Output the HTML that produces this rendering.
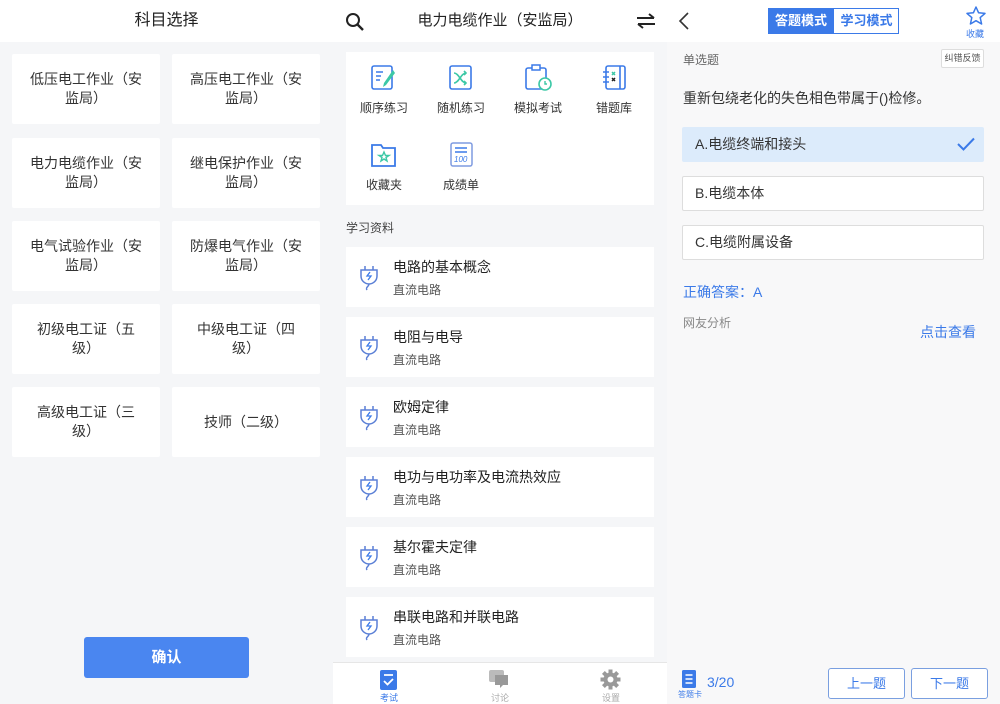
<!DOCTYPE html>
<html><head><meta charset="utf-8">
<style>
*{margin:0;padding:0;box-sizing:border-box}
body{width:1000px;height:704px;position:relative;overflow:hidden;background:#f5f6f8;font-family:"Liberation Sans","Noto Sans CJK SC",sans-serif;color:#333}
.a{position:absolute}
.hdr{background:#fff;height:42px;top:0}
.card{background:#fff;position:absolute;display:flex;align-items:center;justify-content:center;text-align:center;font-size:14px;line-height:19px;color:#333;border-radius:2px}
.ic{position:absolute;text-align:center;font-size:12px;color:#333;width:70px}
.li{position:absolute;left:346px;width:308px;height:60px;background:#fff}
.li .t{position:absolute;left:47px;top:10px;font-size:14px;color:#222}
.li .s{position:absolute;left:47px;top:34px;font-size:12px;color:#555}
.li svg{position:absolute;left:12px;top:18px}
.opt{position:absolute;left:682px;width:302px;height:35px;border:1px solid #ddd;background:#fff;font-size:14px;padding-left:12px;line-height:33px;color:#333;border-radius:2px}
</style></head><body>
<!-- Left -->
<div class="a hdr" style="left:0;width:333px;text-align:center;font-size:16px;line-height:42px;color:#222">科目选择</div>
<div class="card" style="left:12px;top:54px;width:148px;height:70px">低压电工作业（安<br>监局）</div>
<div class="card" style="left:172px;top:54px;width:148px;height:70px">高压电工作业（安<br>监局）</div>
<div class="card" style="left:12px;top:138px;width:148px;height:70px">电力电缆作业（安<br>监局）</div>
<div class="card" style="left:172px;top:138px;width:148px;height:70px">继电保护作业（安<br>监局）</div>
<div class="card" style="left:12px;top:221px;width:148px;height:70px">电气试验作业（安<br>监局）</div>
<div class="card" style="left:172px;top:221px;width:148px;height:70px">防爆电气作业（安<br>监局）</div>
<div class="card" style="left:12px;top:304px;width:148px;height:70px">初级电工证（五<br>级）</div>
<div class="card" style="left:172px;top:304px;width:148px;height:70px">中级电工证（四<br>级）</div>
<div class="card" style="left:12px;top:387px;width:148px;height:70px">高级电工证（三<br>级）</div>
<div class="card" style="left:172px;top:387px;width:148px;height:70px">技师（二级）</div>
<div class="a" style="left:84px;top:637px;width:165px;height:41px;background:#4a86f0;border-radius:3px;color:#fff;font-size:15px;font-weight:bold;text-align:center;line-height:41px">确认</div>

<!-- Middle -->
<div class="a hdr" style="left:333px;width:334px;text-align:center;font-size:15px;line-height:42px;color:#222">电力电缆作业（安监局）</div>
<svg class="a" style="left:345px;top:12px" width="20" height="20"><circle cx="8" cy="8" r="6" fill="none" stroke="#222" stroke-width="2"/><path d="M12.5 12.5L18 18" stroke="#222" stroke-width="2.4"/></svg>
<svg class="a" style="left:636px;top:13px" width="20" height="16"><path d="M1 5H18M13 1L18 5M19 11H2M7 15L2 11" stroke="#222" stroke-width="2" fill="none"/></svg>
<div class="a" style="left:346px;top:52px;width:308px;height:153px;background:#fff"></div>
<svg class="a" style="left:371px;top:64px" width="26" height="28"><rect x="1" y="2" width="20" height="23" rx="2" fill="none" stroke="#3b7ae8" stroke-width="1.6"/><path d="M5 8H12M5 12H10M5 16H9" stroke="#3b7ae8" stroke-width="1.6"/><path d="M22 6L13 19L12 23L15 21L24 9Z" fill="#3cc8a6"/></svg>
<svg class="a" style="left:449px;top:64px" width="24" height="28"><rect x="1" y="2" width="21" height="23" rx="2" fill="none" stroke="#3b7ae8" stroke-width="1.6"/><path d="M5 9C10 9 12 19 17 19M5 19C10 19 12 9 17 9M15 7L17 9L15 11M15 17L17 19L15 21" stroke="#3cc8a6" stroke-width="1.6" fill="none"/></svg>
<svg class="a" style="left:525px;top:63px" width="28" height="30"><rect x="1" y="5" width="20" height="21" rx="2" fill="none" stroke="#3b7ae8" stroke-width="1.6"/><rect x="7" y="2" width="8" height="5" fill="#fff" stroke="#3b7ae8" stroke-width="1.5"/><circle cx="20" cy="21" r="6" fill="#fff" stroke="#3cc8a6" stroke-width="1.6"/><path d="M20 18V21H22" stroke="#3cc8a6" stroke-width="1.4" fill="none"/></svg>
<svg class="a" style="left:602px;top:64px" width="26" height="28"><rect x="4" y="2" width="19" height="23" rx="2" fill="none" stroke="#3b7ae8" stroke-width="1.6"/><path d="M1 8H7M1 13H7M1 18H7M18 2V25" stroke="#3b7ae8" stroke-width="1.6"/><path d="M10 8L13 11M13 8L10 11" stroke="#3cc8a6" stroke-width="1.5"/><path d="M10 14L13 17M13 14L10 17" stroke="#222" stroke-width="1.5"/></svg>
<div class="ic" style="left:349px;top:99px">顺序练习</div>
<div class="ic" style="left:426px;top:99px">随机练习</div>
<div class="ic" style="left:503px;top:99px">模拟考试</div>
<div class="ic" style="left:579px;top:99px">错题库</div>
<svg class="a" style="left:371px;top:142px" width="26" height="26"><path d="M1 3H10L12 6H24V24H1Z" fill="none" stroke="#3b7ae8" stroke-width="1.8"/><path d="M13 10L14.5 13.5H18L15 15.5L16 19L13 17L10 19L11 15.5L8 13.5H11.5Z" fill="none" stroke="#3cc8a6" stroke-width="1.4"/></svg>
<svg class="a" style="left:450px;top:141px" width="24" height="28"><rect x="1" y="2" width="21" height="23" rx="2" fill="none" stroke="#7f9be0" stroke-width="1.5"/><path d="M5 7H17M5 11H17" stroke="#3b7ae8" stroke-width="1.5"/><text x="4" y="21" font-size="8" font-style="italic" fill="#3b7ae8" font-family="Liberation Sans">100</text></svg>
<div class="ic" style="left:349px;top:176px">收藏夹</div>
<div class="ic" style="left:426px;top:176px">成绩单</div>
<div class="a" style="left:346px;top:219px;font-size:12px;color:#444">学习资料</div>

<div class="li" style="top:247px"><svg width="22" height="26" viewBox="0 0 22 26"><path d="M3 5H19V11A8 8 0 0 1 3 11Z" fill="none" stroke="#5a7fd6" stroke-width="1.5"/><path d="M7 1V5M15 1V5M11 19C11 22 7 22 9 25" stroke="#5a7fd6" stroke-width="1.5" fill="none"/><path d="M12 7L9 11H13L10 15" stroke="#3b7ae8" stroke-width="1.3" fill="none"/></svg><div class="t">电路的基本概念</div><div class="s">直流电路</div></div>
<div class="li" style="top:317px"><svg width="22" height="26" viewBox="0 0 22 26"><path d="M3 5H19V11A8 8 0 0 1 3 11Z" fill="none" stroke="#5a7fd6" stroke-width="1.5"/><path d="M7 1V5M15 1V5M11 19C11 22 7 22 9 25" stroke="#5a7fd6" stroke-width="1.5" fill="none"/><path d="M12 7L9 11H13L10 15" stroke="#3b7ae8" stroke-width="1.3" fill="none"/></svg><div class="t">电阻与电导</div><div class="s">直流电路</div></div>
<div class="li" style="top:387px"><svg width="22" height="26" viewBox="0 0 22 26"><path d="M3 5H19V11A8 8 0 0 1 3 11Z" fill="none" stroke="#5a7fd6" stroke-width="1.5"/><path d="M7 1V5M15 1V5M11 19C11 22 7 22 9 25" stroke="#5a7fd6" stroke-width="1.5" fill="none"/><path d="M12 7L9 11H13L10 15" stroke="#3b7ae8" stroke-width="1.3" fill="none"/></svg><div class="t">欧姆定律</div><div class="s">直流电路</div></div>
<div class="li" style="top:457px"><svg width="22" height="26" viewBox="0 0 22 26"><path d="M3 5H19V11A8 8 0 0 1 3 11Z" fill="none" stroke="#5a7fd6" stroke-width="1.5"/><path d="M7 1V5M15 1V5M11 19C11 22 7 22 9 25" stroke="#5a7fd6" stroke-width="1.5" fill="none"/><path d="M12 7L9 11H13L10 15" stroke="#3b7ae8" stroke-width="1.3" fill="none"/></svg><div class="t">电功与电功率及电流热效应</div><div class="s">直流电路</div></div>
<div class="li" style="top:527px"><svg width="22" height="26" viewBox="0 0 22 26"><path d="M3 5H19V11A8 8 0 0 1 3 11Z" fill="none" stroke="#5a7fd6" stroke-width="1.5"/><path d="M7 1V5M15 1V5M11 19C11 22 7 22 9 25" stroke="#5a7fd6" stroke-width="1.5" fill="none"/><path d="M12 7L9 11H13L10 15" stroke="#3b7ae8" stroke-width="1.3" fill="none"/></svg><div class="t">基尔霍夫定律</div><div class="s">直流电路</div></div>
<div class="li" style="top:597px"><svg width="22" height="26" viewBox="0 0 22 26"><path d="M3 5H19V11A8 8 0 0 1 3 11Z" fill="none" stroke="#5a7fd6" stroke-width="1.5"/><path d="M7 1V5M15 1V5M11 19C11 22 7 22 9 25" stroke="#5a7fd6" stroke-width="1.5" fill="none"/><path d="M12 7L9 11H13L10 15" stroke="#3b7ae8" stroke-width="1.3" fill="none"/></svg><div class="t">串联电路和并联电路</div><div class="s">直流电路</div></div>

<div class="a" style="left:333px;top:662px;width:334px;height:42px;background:#fff;border-top:1px solid #e6e6e6"></div>
<svg class="a" style="left:380px;top:670px" width="17" height="20"><rect width="17" height="20" rx="2" fill="#3b7ae8"/><path d="M4 5H13M4 11L7.5 14.5L13 9" stroke="#fff" stroke-width="1.8" fill="none"/></svg>
<div class="a" style="left:380px;top:691px;font-size:9px;color:#3b7ae8">考试</div>
<svg class="a" style="left:489px;top:670px" width="20" height="19"><rect x="0" y="0" width="15" height="12" rx="2" fill="#bbb"/><path d="M6 5H19V15H14L11 18V15H6Z" fill="#999"/></svg>
<div class="a" style="left:491px;top:691px;font-size:9px;color:#aaa">讨论</div>
<svg class="a" style="left:600px;top:669px" width="21" height="21" viewBox="0 0 21 21"><circle cx="10.5" cy="10.5" r="7" fill="#999"/><path d="M10.5 0.5V20.5M0.5 10.5H20.5M3.4 3.4L17.6 17.6M17.6 3.4L3.4 17.6" stroke="#999" stroke-width="4"/><circle cx="10.5" cy="10.5" r="3" fill="#fff"/></svg>
<div class="a" style="left:602px;top:691px;font-size:9px;color:#aaa">设置</div>

<!-- Right -->
<div class="a" style="left:667px;top:0;width:333px;height:704px;background:#f8f8f9"></div>
<div class="a hdr" style="left:667px;width:333px"></div>
<svg class="a" style="left:678px;top:12px" width="12" height="18"><path d="M10 1L2 9L10 17" stroke="#333" stroke-width="1.6" fill="none"/></svg>
<div class="a" style="left:768px;top:8px;width:131px;height:26px;border:1px solid #3b7ae8;background:#fff"></div>
<div class="a" style="left:768px;top:8px;width:66px;height:26px;background:#3b7ae8;color:#fff;font-size:13px;font-weight:bold;text-align:center;line-height:26px">答题模式</div>
<div class="a" style="left:834px;top:8px;width:65px;height:26px;color:#3b7ae8;font-size:13px;font-weight:bold;text-align:center;line-height:26px">学习模式</div>
<svg class="a" style="left:966px;top:6px" width="20" height="19"><path d="M10 1L12.6 6.8L19 7.4L14.2 11.6L15.6 18L10 14.7L4.4 18L5.8 11.6L1 7.4L7.4 6.8Z" fill="none" stroke="#3b7ae8" stroke-width="1.5" stroke-linejoin="round"/></svg>
<div class="a" style="left:966px;top:27px;font-size:9px;color:#3b7ae8">收藏</div>
<div class="a" style="left:683px;top:51px;font-size:12px;color:#666">单选题</div>
<div class="a" style="left:941px;top:49px;width:43px;height:19px;border:1px solid #ddd;background:#fff;font-size:9px;color:#555;text-align:center;line-height:17px;border-radius:2px">纠错反馈</div>
<div class="a" style="left:683px;top:88px;font-size:14px;color:#333">重新包绕老化的失色相色带属于()检修。</div>
<div class="opt" style="top:127px;background:#dcebfb;border-color:#dcebfb">A.电缆终端和接头</div>
<svg class="a" style="left:957px;top:137px" width="18" height="14"><path d="M1 7L6.5 12.5L17 1.5" stroke="#3b7ae8" stroke-width="2" fill="none"/></svg>
<div class="opt" style="top:176px">B.电缆本体</div>
<div class="opt" style="top:225px">C.电缆附属设备</div>
<div class="a" style="left:683px;top:282px;font-size:14px;color:#3b7ae8">正确答案：A</div>
<div class="a" style="left:683px;top:314px;font-size:12px;color:#888">网友分析</div>
<div class="a" style="left:920px;top:322px;font-size:14px;color:#3b7ae8">点击查看</div>
<div class="a" style="left:667px;top:662px;width:333px;height:42px;background:#f8f8f9"></div>
<svg class="a" style="left:682px;top:670px" width="14" height="18"><rect width="14" height="18" rx="1.5" fill="#3b7ae8"/><path d="M3.5 5H10.5M3.5 9H10.5M3.5 13H10.5" stroke="#fff" stroke-width="1.6"/></svg>
<div class="a" style="left:678px;top:689px;font-size:8px;color:#3b7ae8">答题卡</div>
<div class="a" style="left:707px;top:674px;font-size:14px;color:#3b7ae8">3/20</div>
<div class="a" style="left:828px;top:668px;width:77px;height:31px;border:1px solid #7a9fe0;background:#fff;border-radius:3px;color:#3b7ae8;font-size:13px;text-align:center;line-height:29px">上一题</div>
<div class="a" style="left:911px;top:668px;width:77px;height:31px;border:1px solid #7a9fe0;background:#fff;border-radius:3px;color:#3b7ae8;font-size:13px;text-align:center;line-height:29px">下一题</div>
</body></html>
